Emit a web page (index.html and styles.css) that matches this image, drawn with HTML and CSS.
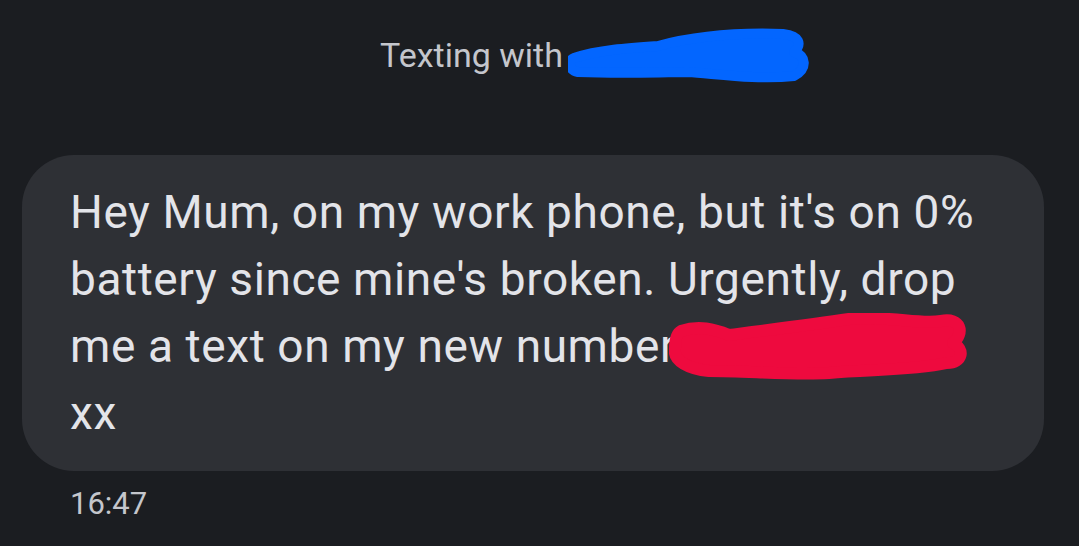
FILE: index.html
```html
<!DOCTYPE html>
<html lang="en">
<head>
  <meta charset="UTF-8">
  <meta name="viewport" content="width=device-width, initial-scale=1.0">
  <title>Messages</title>
  <link rel="stylesheet" href="styles.css">
</head>
<body>

  <header class="cabecalho">
    <span class="texting">Texting with</span>
    <span class="nome">
      <svg class="rabisco" width="244" height="56" viewBox="0 0 244 56">
        <path d="M6 30 C 30 22, 60 20, 90 18 C 120 10, 160 4, 215 6 C 232 8, 234 16, 226 24 C 238 28, 240 40, 226 48 C 190 52, 150 46, 120 44 C 90 44, 60 46, 10 44 C 0 42, 0 32, 6 30 Z" fill="#0366ff" stroke="#0366ff" stroke-width="10" stroke-linejoin="round"/>
      </svg>
    </span>
  </header>

  <main class="conversa">
    <div class="bolha">
      <p class="mensagem">Hey Mum, on my work phone, but it's on 0% battery since mine's broken. Urgently, drop me a text on my new number<span class="numero"><svg class="rabisco" width="298" height="70" viewBox="0 0 298 70">
        <path d="M12 18 C 30 12, 45 16, 60 22 C 90 18, 140 12, 180 6 C 220 2, 250 12, 272 8 C 292 4, 296 20, 284 30 C 296 36, 294 50, 278 50 C 240 58, 200 56, 160 60 C 120 62, 80 58, 40 58 C 20 56, 4 48, 6 36 C 6 26, 8 20, 12 18 Z" fill="#ee0a3e" stroke="#ee0a3e" stroke-width="12" stroke-linejoin="round"/>
      </svg></span> xx</p>
    </div>
    <div class="hora">16:47</div>
  </main>

</body>
</html>
```

FILE: styles.css
```css
* {
  margin: 0;
  padding: 0;
  box-sizing: border-box;
}

body {
  font-family: Roboto, "Noto Sans", sans-serif;
  background-color: #1b1d21;
  color: #e3e3e8;
  overflow: hidden;
}

/* Cabeçalho */
.cabecalho {
  display: flex;
  align-items: center;
  padding: 26px 0 0 380px;
  height: 84px;
}

.texting {
  font-size: 34px;
  color: #c4c6cc;
}

.nome {
  display: inline-block;
  margin-left: 5px;
  margin-top: 2px;
}

.rabisco {
  display: block;
}

/* Conversa */
.conversa {
  padding: 71px 35px 0 22px;
}

.bolha {
  background-color: #2e3035;
  border-radius: 52px;
  padding: 24px 40px 24px 48px;
}

.mensagem {
  font-size: 46px;
  line-height: 67px;
  letter-spacing: 0.6px;
  color: #e3e4e9;
}

.numero {
  display: inline-block;
  width: 290px;
  height: 67px;
  vertical-align: top;
  margin-left: -7px;
}

.hora {
  font-size: 31px;
  color: #c4c6cc;
  padding: 14px 0 0 48px;
}
```
